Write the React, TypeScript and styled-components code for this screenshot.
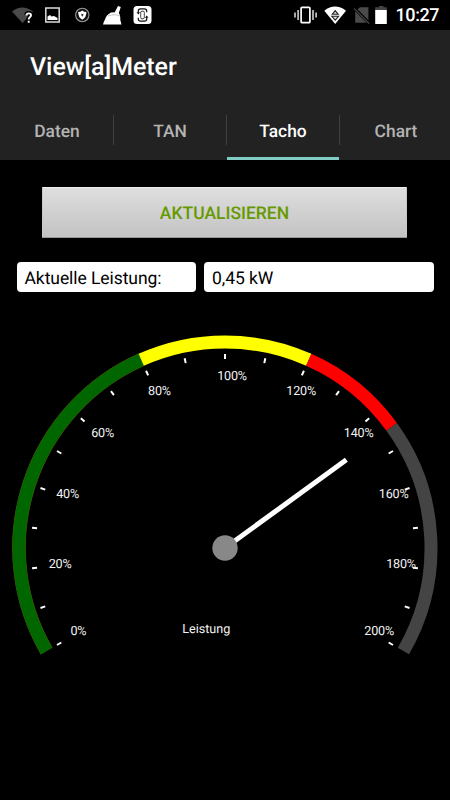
import React from "react";
import styled, { createGlobalStyle } from "styled-components";

const GlobalStyle = createGlobalStyle`
  * { box-sizing: border-box; }
  html, body { margin: 0; background: #000; }
  body {
    font-family: Roboto, "Liberation Sans", sans-serif;
    text-rendering: geometricPrecision;
  }
`;

const Screen = styled.div`
  width: 450px;
  height: 800px;
  display: flex;
  flex-direction: column;
  background: #000;
  overflow: hidden;
`;

const StatusBar = styled.div`
  height: 30px;
  flex: none;
  display: flex;
  align-items: center;
  justify-content: space-between;
  padding-right: 10px;
`;

const StatusIcons = styled.svg`
  display: block;
  flex: none;
`;

const StatusRight = styled.div`
  display: flex;
  align-items: center;
`;

const Clock = styled.span`
  width: 52px;
  height: 30px;
  padding-left: 7.5px;
  font-size: 18px;
  font-weight: 500;
  letter-spacing: -0.4px;
  line-height: 32px;
  color: #fff;
  white-space: nowrap;
`;

const Header = styled.header`
  height: 130px;
  flex: none;
  background: #222;
`;

const Title = styled.h1`
  margin: 0;
  height: 72px;
  padding-left: 30px;
  line-height: 75px;
  font-size: 25px;
  font-weight: 500;
  letter-spacing: -0.05px;
  color: #fff;
`;

const Tabs = styled.nav`
  height: 58px;
  display: grid;
  grid-template-columns: repeat(4, 113px);
`;

const Tab = styled.div<{ $active?: boolean }>`
  display: flex;
  flex-direction: column;
  text-align: center;
  font-size: 17.4px;
  font-weight: 500;
  color: ${(p) => (p.$active ? "#fff" : "#b4b4b4")};
  & + & {
    background: linear-gradient(#3f3f3f, #3f3f3f) 0 13px / 1px 30px no-repeat;
  }
`;

const TabLabel = styled.span`
  height: 55px;
  padding-left: 1px;
  line-height: 61px;
`;

const TabIndicator = styled.span`
  height: 3px;
  margin-left: 1px;
  background: #80cbc4;
`;

const Content = styled.main`
  display: flex;
  flex-direction: column;
`;

const RefreshButton = styled.button`
  width: 365px;
  height: 51px;
  margin: 26.5px 0 0 42px;
  padding: 3px 0 0;
  border: 1px solid #c8c8c8;
  border-top-color: #eee;
  border-bottom-color: #969696;
  border-radius: 1px;
  background: linear-gradient(180deg, #dedede, #c3c3c3);
  color: #669900;
  font: 500 17.5px Roboto, sans-serif;
  text-rendering: geometricPrecision;
`;

const Fields = styled.div`
  display: grid;
  grid-template-columns: 179.5px 229.5px;
  gap: 8px;
  margin: 24px 0 0 16.5px;
`;

const Field = styled.div`
  height: 30.5px;
  padding-left: 8px;
  border-radius: 4px;
  background: #fff;
  color: #000;
  font-size: 17.5px;
  letter-spacing: -0.07px;
  line-height: 34px;
  white-space: nowrap;
`;

const GaugeSvg = styled.svg`
  display: block;
  margin-top: 27.5px;
`;

const GaugeText = styled.text<{ $tight?: boolean }>`
  font-family: Roboto, sans-serif;
  font-size: 12.6px;
  letter-spacing: ${(p) => (p.$tight ? "-0.2px" : "0")};
  fill: #f4f4f4;
`;

const CX = 225;
const CY = 548;

const point = (value: number, radius: number): [number, number] => {
  const a = ((210 - value * 1.2) * Math.PI) / 180;
  return [CX + radius * Math.cos(a), CY - radius * Math.sin(a)];
};

const arc = (from: number, to: number) => {
  const r = 206;
  const large = (to - from) * 1.2 > 180 ? 1 : 0;
  return `M${point(from, r).join(" ")}A${r} ${r} 0 ${large} 1 ${point(to, r).join(" ")}`;
};

const bands = [
  { from: 0, to: 80, color: "#006600" },
  { from: 80, to: 120, color: "#ffff00" },
  { from: 120, to: 145, color: "#ff0000" },
  { from: 145, to: 200, color: "#444444" },
];

const labels: [string, number, number][] = [
  ["0%", 70.4, 634.5],
  ["20%", 48.7, 567.8],
  ["40%", 56.2, 497.5],
  ["60%", 91.2, 436.5],
  ["80%", 148, 395],
  ["100%", 217.2, 380],
  ["120%", 286.3, 395],
  ["140%", 343.8, 436.5],
  ["160%", 378.8, 497.5],
  ["180%", 386.2, 567.8],
  ["200%", 364.3, 634.5],
];

function Gauge() {
  const [nx, ny] = point(145, 150);
  return (
    <GaugeSvg width="450" height="345" viewBox="0 320 450 345">
      <path d={arc(0, 80)} fill="none" stroke="#6b5200" strokeWidth="13.6" />
      {bands.map((b) => (
        <path key={b.from} d={arc(b.from, b.to)} fill="none" stroke={b.color} strokeWidth="13" />
      ))}
      {Array.from({ length: 21 }, (_, i) => {
        const [x1, y1] = point(i * 10, 189);
        const [x2, y2] = point(i * 10, 194);
        return <line key={i} x1={x1} y1={y1} x2={x2} y2={y2} stroke="#fff" strokeWidth="2" />;
      })}
      {labels.map(([text, x, y]) => (
        <GaugeText $tight key={text} x={x} y={y}>{text}</GaugeText>
      ))}
      <GaugeText x="182.2" y="633.3">Leistung</GaugeText>
      <line x1={CX} y1={CY} x2={nx} y2={ny} stroke="#fff" strokeWidth="5" />
      <circle cx={CX} cy={CY} r="12.7" fill="#888" />
    </GaugeSvg>
  );
}

function Notifications() {
  return (
    <StatusIcons width="160" height="30" viewBox="0 0 160 30">
      <path d="M12 11.5Q22 3.5 33 11.5L22.5 23Z" fill="#4a4a4a" />
      <path d="M26.4 15.1Q26.6 13.2 28.7 13.2Q31 13.2 31 15.1Q31 16.2 29.8 17.1Q28.7 18 28.7 19.4M28.7 20.8V22.6" fill="none" stroke="#000" strokeWidth="4.5" />
      <path d="M26.4 15.4Q26.6 13.4 28.7 13.4Q31 13.4 31 15.3Q31 16.3 29.8 17.2Q28.7 18 28.7 19.4M28.7 20.8V22.8" fill="none" stroke="#fff" strokeWidth="1.9" />
      <path d="M45.8 8H59.2V22H45.8Z" fill="none" stroke="#ddd" strokeWidth="1.5" />
      <path d="M47.5 20V16.5L50 15L51.5 16.5L54 16L57.5 18V20Z" fill="#fff" />
      <circle cx="82.3" cy="15" r="6.7" fill="#111" stroke="#999" strokeWidth="1.1" />
      <path d="M78.2 12Q80.5 12 82.3 10.5Q84 12 86.4 12Q86.6 17.3 82.3 19.8Q78 17.3 78.2 12Z" fill="#fff" />
      <path d="M81.3 13.4L82.3 14.2L83.3 13.4V15.2L82.3 16.8L81.3 15.2Z" fill="#333" />
      <path d="M118 6L120.8 7L118.8 13Q120.5 15 120.3 20L121.5 24.5H103Q103.5 22 105 19.5Q106 15 111 12.4L114.8 12.3Z" fill="#fff" />
      <path d="M108 16Q115 13.5 119.8 16" fill="none" stroke="#999" strokeWidth=".6" />
      <rect x="133.5" y="6" width="18" height="18" rx="3.5" fill="#fff" />
      <path d="M138.3 12.8V11Q138.3 8.8 140.5 8.8H144.5Q146.7 8.8 146.7 11V12.3M138.3 17.7V19Q138.3 21.2 140.5 21.2H144.5Q146.7 21.2 146.7 19V17.2" fill="none" stroke="#111" strokeWidth="1.2" />
      <path d="M140.7 12.8V12.2Q140.7 11.2 142 11.2H143Q144.3 11.2 144.3 12.2V17.8Q144.3 18.8 143 18.8H142Q140.7 18.8 140.7 17.8V12.5" fill="none" stroke="#333" strokeWidth=".9" />
      <path d="M136.5 12.3H140.1L138.3 14.6ZM144.9 17.7H148.5L146.7 15.4Z" fill="#111" />
    </StatusIcons>
  );
}

function SystemIcons() {
  return (
    <StatusIcons width="96" height="30" viewBox="292 0 96 30">
      <rect x="301.1" y="7.3" width="8.8" height="15.4" rx="1" fill="none" stroke="#fff" strokeWidth="1.7" />
      <path d="M298.1 10V20M313 10V20M295 12.5V17.5M316.1 12.5V17.5" stroke="#ddd" strokeWidth="1.5" />
      <path d="M324.3 10.7Q335 2.4 346 10.7L335.2 24Z" fill="#fff" />
      <path d="M332.2 14.3L335.2 10.6L338.2 14.3ZM331.8 16.3H338.6L335.2 20.2Z" fill="#ddd" stroke="#222" strokeWidth="1.1" />
      <path d="M360 7.2H368.4V20.5L357.3 9.5ZM355.2 11.2L366.7 22.8H355.2Z" fill="#4a4a4a" />
      <path d="M354.2 8.4L369.2 23.6" stroke="#4a4a4a" strokeWidth="1.3" />
      <path d="M356 8.5L369 21.7" stroke="#000" strokeWidth="1" />
      <path d="M379 6H383.5V7.3H386.8V10.2H375.2V7.3H379Z" fill="#444" />
      <path d="M375.2 10H386.8V24H375.2Z" fill="#fff" />
    </StatusIcons>
  );
}

export default function App() {
  return (
    <>
      <GlobalStyle />
      <Screen>
        <StatusBar>
          <Notifications />
          <StatusRight>
            <SystemIcons />
            <Clock>10:27</Clock>
          </StatusRight>
        </StatusBar>
        <Header>
          <Title>View[a]Meter</Title>
          <Tabs>
            <Tab><TabLabel>Daten</TabLabel></Tab>
            <Tab><TabLabel>TAN</TabLabel></Tab>
            <Tab $active><TabLabel>Tacho</TabLabel><TabIndicator /></Tab>
            <Tab><TabLabel>Chart</TabLabel></Tab>
          </Tabs>
        </Header>
        <Content>
          <RefreshButton>AKTUALISIEREN</RefreshButton>
          <Fields>
            <Field>Aktuelle Leistung:</Field>
            <Field>0,45 kW</Field>
          </Fields>
          <Gauge />
        </Content>
      </Screen>
    </>
  );
}
